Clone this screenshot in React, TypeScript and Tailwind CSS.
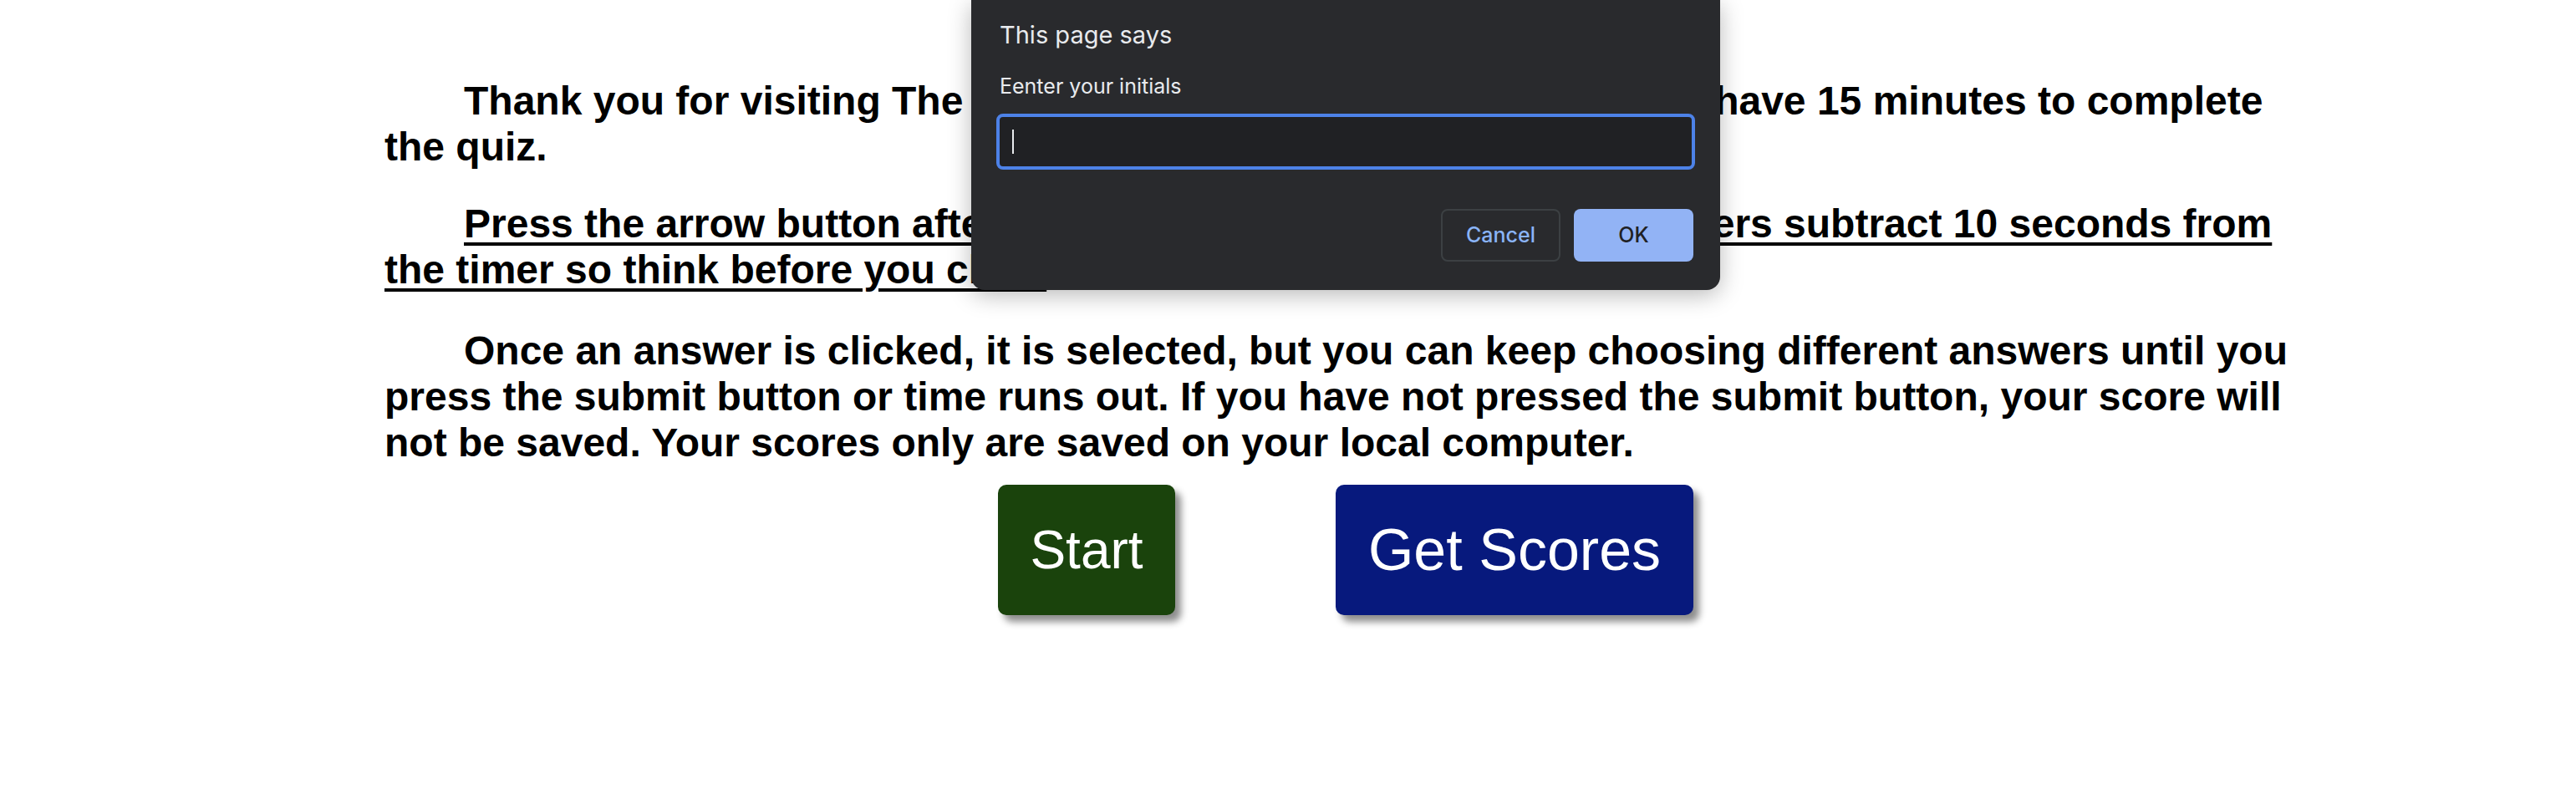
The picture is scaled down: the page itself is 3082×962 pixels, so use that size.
export default function App() {
  return (
    <div className="relative min-h-[962px] bg-white text-black font-['Liberation_Sans',Arial,sans-serif]">
      <div className="ml-[460px] w-[2300px] pt-[93px]">
        <p className="text-[48px] leading-[55px] font-bold indent-[95px]">
          Thank you for visiting The Web Developers Coding Quiz. You will have 15 minutes to complete the quiz.
        </p>
        <p className="mt-[37px] text-[48px] leading-[55px] font-bold indent-[95px] underline decoration-[4px] underline-offset-[6px]">
          Press the arrow button after choosing the answer. Incorrect answers subtract 10 seconds from the timer so think before you click.
        </p>
        <p className="mt-[42px] text-[48px] leading-[55px] font-bold indent-[95px]">
          Once an answer is clicked, it is selected, but you can keep choosing different answers until you press the submit button or time runs out. If you have not pressed the submit button, your score will not be saved. Your scores only are saved on your local computer.
        </p>
        <div className="mt-[23px] flex justify-center gap-[192px]">
          <button className="w-[212px] h-[156px] rounded-[10px] bg-[#1a430c] text-white text-[64px] shadow-[7px_8px_8px_rgba(0,0,0,0.45)]">
            Start
          </button>
          <button className="w-[428px] h-[156px] rounded-[10px] bg-[#07197d] text-white text-[70px] shadow-[7px_8px_8px_rgba(0,0,0,0.45)]">
            Get Scores
          </button>
        </div>
      </div>

      {/* prompt dialog */}
      <div className="absolute top-0 left-[1162px] w-[896px] flex flex-col px-[30px] pt-[24px] pb-[34px] bg-[#292a2d] rounded-b-[16px] shadow-[0_6px_28px_rgba(0,0,0,0.28)] font-['Inter',sans-serif] text-[#e8eaed]">
        <div className="pl-[4px] text-[29px] leading-[36px]">This page says</div>
        <div className="mt-[28px] pl-[4px] text-[25px] leading-[30px]">Eenter your initials</div>
        <div className="mt-[18px] h-[67px] flex items-center pl-[15px] border-[4px] border-[#4d82e8] rounded-[8px] bg-[#202124]">
          <div className="w-[2px] h-[29px] bg-[#e8eaed]" />
        </div>
        <div className="mt-[47px] flex justify-end gap-[16px] pr-[2px]">
          <div className="w-[143px] h-[63px] flex items-center justify-center rounded-[8px] border-[2px] border-[#3c4043] text-[25px] font-medium text-[#8ab4f8]">
            Cancel
          </div>
          <div className="w-[143px] h-[63px] flex items-center justify-center rounded-[8px] bg-[#92b3f5] text-[25px] font-medium text-[#202124]">
            OK
          </div>
        </div>
      </div>
    </div>
  );
}
